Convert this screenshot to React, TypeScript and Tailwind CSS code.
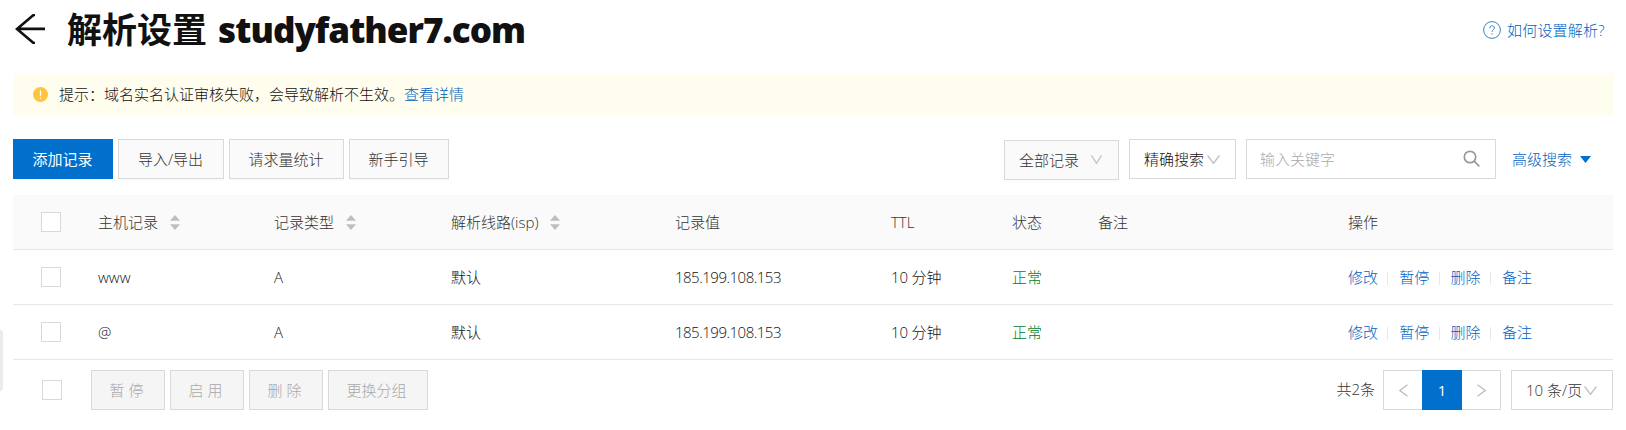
import React from 'react';

const records = [
  { host: 'www', type: 'A', line: '默认', value: '185.199.108.153', ttl: '10 分钟', status: '正常' },
  { host: '@', type: 'A', line: '默认', value: '185.199.108.153', ttl: '10 分钟', status: '正常' },
];

const columns =
  'grid grid-cols-[85px_176px_177px_224px_216px_121px_86px_250px_1fr] items-center h-[55px] border-b';

function Checkbox({ className = '' }: { className?: string }) {
  return <span className={`block size-5 border border-[#d9d9d9] bg-white ${className}`} />;
}

function Chevron({ className = '' }: { className?: string }) {
  return (
    <svg className={className} viewBox="0 0 12 9" preserveAspectRatio="none" fill="none" stroke="#c0c0c0" strokeWidth="1.3">
      <path d="M0.5 0.4L6 8.4L11.5 0.4" />
    </svg>
  );
}

function Sort() {
  return (
    <svg className="ml-3 h-[15px] w-[10px]" viewBox="0 0 10 15" fill="#bfbfbf">
      <path d="M5 0L10 5.7H0Z" />
      <path d="M5 15L10 9.3H0Z" />
    </svg>
  );
}

function Button({ children, className = '' }: { children: React.ReactNode; className?: string }) {
  return (
    <button className={`h-10 shrink-0 border border-[#d9d9d9] bg-[#fafafa] pr-px pb-px text-[#333] shadow-[0_2px_0_rgba(0,0,0,0.015)] ${className}`}>
      {children}
    </button>
  );
}

function DisabledButton({ children, className = 'w-[74px]' }: { children: React.ReactNode; className?: string }) {
  return <button className={`h-10 border border-[#d9d9d9] bg-[#f5f5f5] pr-[3px] text-[#a8a8a8] ${className}`}>{children}</button>;
}

function Actions() {
  return (
    <div className="flex items-center text-[#005fc0]">
      {['修改', '暂停', '删除', '备注'].map((name, i) => (
        <React.Fragment key={name}>
          {i > 0 && <span className="mt-0.5 mr-[11px] ml-2.5 h-[13px] w-px bg-[#e3e9ed]" />}
          <a className="w-[29.3px] whitespace-nowrap">{name}</a>
        </React.Fragment>
      ))}
    </div>
  );
}

export default function App() {
  return (
    <div className="relative h-[430px] w-[1626px] overflow-hidden bg-white pr-[13px] pl-[13px] font-['Open_Sans','Noto_Sans_CJK_SC',sans-serif] text-[15px] leading-[22px] font-light text-[#111]">
      <header className="flex h-[73px] items-start justify-between">
        <div className="flex items-start">
          <svg className="mt-[14px] ml-[2px] h-[30px] w-[31px]" viewBox="0 0 31 30" fill="none" stroke="#111" strokeWidth="2.6">
            <path d="M30 14.9H2M20 1H18.5L2 14.9L18.5 29H20" />
          </svg>
          <h1 className="mt-[6px] ml-[21px] text-[35px] leading-[48px] font-bold whitespace-nowrap text-[#111]">
            解析设置 <span className="ml-[2px] font-extrabold tracking-[-0.95px]">studyfather7.com</span>
          </h1>
        </div>
        <a className="mt-[19px] mr-[7px] flex items-center gap-1.5 text-[#005fc0]">
          <svg className="size-[18px]" viewBox="0 0 18 18" fill="none" stroke="#3a82c4" strokeWidth="1">
            <circle cx="9" cy="9" r="8.4" />
            <path d="M6.7 7.2C6.7 4 11.4 4 11.4 7C11.4 8.7 9.1 8.7 9.1 10.8M9.1 12.2V13.5" />
          </svg>
          <span className="w-[99px] whitespace-nowrap tracking-[0.2px]">如何设置解析?</span>
        </a>
      </header>

      <div className="flex h-[42px] items-center bg-[#fffdee] pl-5">
        <svg className="size-[15px]" viewBox="0 0 15 15">
          <circle cx="7.5" cy="7.5" r="7.5" fill="#ffc440" />
          <path d="M7.5 3.2V8.8M7.5 10.2V11.8" stroke="#fff" strokeWidth="1.2" />
        </svg>
        <p className="ml-[11px]">
          提示：域名实名认证审核失败，会导致解析不生效。<a className="text-[#005fc0]">查看详情</a>
        </p>
      </div>

      <div className="mt-6 flex h-10 items-start justify-between">
        <div className="flex gap-[5px]">
          <button className="h-10 w-[100px] bg-[#0070cc] pr-px font-normal text-white">添加记录</button>
          <Button className="w-[106px]">导入/导出</Button>
          <Button className="w-[115px]">请求量统计</Button>
          <Button className="w-[100px]">新手引导</Button>
        </div>
        <div className="flex">
          <Button className="mt-px flex w-[115px] items-center pl-[14px]">
            全部记录
            <Chevron className="ml-[12px] h-[9px] w-[11px]" />
          </Button>
          <div className="ml-2.5 flex h-10 w-[107px] items-center border border-[#d9d9d9] pl-[14px]">
            精确搜索
            <Chevron className="ml-[3px] h-[9px] w-[13px]" />
          </div>
          <div className="ml-2.5 flex h-10 w-[250px] items-center justify-between border border-[#d9d9d9] pr-[15px] pl-[13px] text-[#aaa]">
            <span>输入关键字</span>
            <svg className="mb-[2px] size-[17px]" viewBox="0 0 17 17" fill="none" stroke="#999" strokeWidth="1.7">
              <circle cx="7" cy="7" r="5.7" />
              <path d="M11.1 11.1L16.3 16.3" />
            </svg>
          </div>
          <a className="ml-4 flex h-10 w-[101px] items-center text-[#005fc0]">
            高级搜索
            <svg className="ml-2 h-[7px] w-[11px]" viewBox="0 0 11 7" fill="#0070cc">
              <path d="M0 0H11L5.5 7Z" />
            </svg>
          </a>
        </div>
      </div>

      <main className="mt-4">
        <div className={`${columns} border-[#e5e5e5] bg-[#fafafa] text-[#333]`}>
          <Checkbox className="ml-7" />
          <div className="flex items-center">主机记录<Sort /></div>
          <div className="flex items-center">记录类型<Sort /></div>
          <div className="flex items-center">解析线路(isp)<Sort /></div>
          <div>记录值</div>
          <div>TTL</div>
          <div>状态</div>
          <div>备注</div>
          <div>操作</div>
        </div>
        {records.map((r) => (
          <div key={r.host} className={`${columns} border-[#e3e9ed] last:border-[#e8e8e8]`}>
            <Checkbox className="ml-7" />
            <div>{r.host}</div>
            <div>{r.type}</div>
            <div>{r.line}</div>
            <div className="tracking-[-0.5px]">{r.value}</div>
            <div className="tracking-[-0.15px]">{r.ttl}</div>
            <div className="text-[#00802a]">{r.status}</div>
            <div />
            <Actions />
          </div>
        ))}
      </main>

      <footer className="mt-2.5 flex h-10 items-center">
        <Checkbox className="ml-[29px]" />
        <div className="ml-[29px] flex gap-[5px]">
          <DisabledButton>暂 停</DisabledButton>
          <DisabledButton>启 用</DisabledButton>
          <DisabledButton>删 除</DisabledButton>
          <DisabledButton className="w-[100px]">更换分组</DisabledButton>
        </div>
        <span className="mr-[8px] mb-[3px] ml-auto text-[#333]">共2条</span>
        <div className="flex h-10 w-[118px] border border-[#d9d9d9]">
          <span className="flex w-[38px] items-center justify-center">
            <svg className="h-[13px] w-[9px]" viewBox="0 0 9 13" fill="none" stroke="#bbb" strokeWidth="1.2">
              <path d="M8.5 0.7L0.8 6.5L8.5 12.3" />
            </svg>
          </span>
          <span className="-my-px flex w-10 items-center justify-center bg-[#0070cc] font-normal text-white">1</span>
          <span className="flex w-[38px] items-center justify-center">
            <svg className="h-[13px] w-[9px]" viewBox="0 0 9 13" fill="none" stroke="#bbb" strokeWidth="1.2">
              <path d="M0.5 0.7L8.2 6.5L0.5 12.3" />
            </svg>
          </span>
        </div>
        <div className="ml-2.5 flex h-10 w-[102px] items-center border border-[#d9d9d9] pl-[14px] text-[#333]">
          <span className="w-[56px] whitespace-nowrap">10 条/页</span>
          <Chevron className="ml-[2px] h-[9px] w-[13px]" />
        </div>
      </footer>

      <span className="absolute top-[330px] left-0 h-[61px] w-[3px] rounded-r-[3px] bg-[#ebebeb]" />
    </div>
  );
}
